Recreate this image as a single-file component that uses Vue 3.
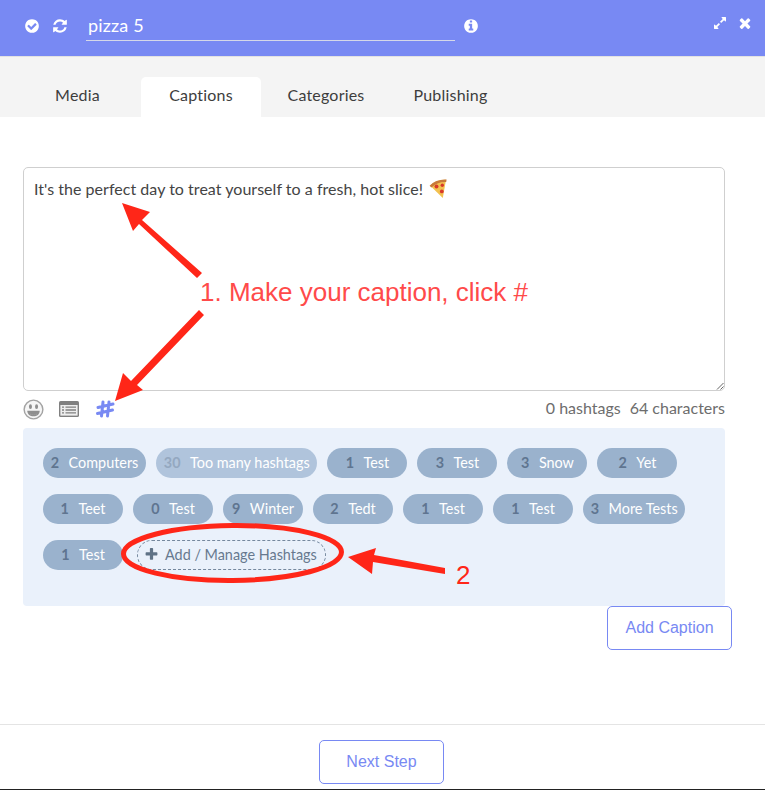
<script setup>
const row = [
  { n: 2, t: 'Computers' }, { n: 30, t: 'Too many hashtags', off: true }, { n: 1, t: 'Test' }, { n: 3, t: 'Test' }, { n: 3, t: 'Snow' }, { n: 2, t: 'Yet' },
  { n: 1, t: 'Teet' }, { n: 0, t: 'Test' }, { n: 9, t: 'Winter' }, { n: 2, t: 'Tedt' }, { n: 1, t: 'Test' }, { n: 1, t: 'Test' }, { n: 3, t: 'More Tests' },
  { n: 1, t: 'Test' }
]
const tabs = ['Media', 'Captions', 'Categories', 'Publishing']
</script>

<template>
  <div class="app">
    <header class="head">
      <svg class="ic ic-check" viewBox="0 0 1792 1792"><path d="M1412 734q0-28-18-46l-91-90q-19-19-45-19t-45 19l-408 407-226-226q-19-19-45-19t-45 19l-91 90q-18 18-18 46 0 27 18 45l362 362q19 19 45 19 27 0 46-19l543-543q18-18 18-45zm252 162q0 209-103 385.5t-279.5 279.5-385.5 103-385.5-103-279.5-279.5-103-385.5 103-385.5 279.5-279.5 385.5-103 385.5 103 279.5 279.5 103 385.5z"/></svg>
      <svg class="ic ic-sync" viewBox="0 0 1792 1792"><path d="M1639 1056q0 5-1 7-64 268-268 434.5t-478 166.5q-146 0-282.5-55t-243.5-157l-129 129q-19 19-45 19t-45-19-19-45v-448q0-26 19-45t45-19h448q26 0 45 19t19 45-19 45l-137 137q71 66 161 102t187 36q134 0 250-65t186-179q11-17 53-117 8-23 30-23h192q13 0 22.5 9.5t9.5 22.5zm25-800v448q0 26-19 45t-45 19h-448q-26 0-45-19t-19-45 19-45l138-138q-148-137-349-137-134 0-250 65t-186 179q-11 17-53 117-8 23-30 23h-199q-13 0-22.5-9.5t-9.5-22.5v-7q65-268 270-434.5t480-166.5q146 0 284 55.5t245 156.5l130-129q19-19 45-19t45 19 19 45z"/></svg>
      <div class="title">pizza 5</div>
      <svg class="ic ic-info" viewBox="0 0 1792 1792"><path d="M1152 1376v-160q0-14-9-23t-23-9h-96v-512q0-14-9-23t-23-9h-320q-14 0-23 9t-9 23v160q0 14 9 23t23 9h96v320h-96q-14 0-23 9t-9 23v160q0 14 9 23t23 9h448q14 0 23-9t9-23zm-128-896v-160q0-14-9-23t-23-9h-192q-14 0-23 9t-9 23v160q0 14 9 23t23 9h192q14 0 23-9t9-23zm640 416q0 209-103 385.5t-279.5 279.5-385.5 103-385.5-103-279.5-279.5-103-385.5 103-385.5 279.5-279.5 385.5-103 385.5 103 279.5 279.5 103 385.5z"/></svg>
      <div class="head-right">
        <svg class="ic-exp" viewBox="0 0 1792 1792"><path d="M883 1056q0 13-10 23l-332 332 144 144q19 19 19 45t-19 45-45 19h-448q-26 0-45-19t-19-45v-448q0-26 19-45t45-19 45 19l144 144 332-332q10-10 23-10t23 10l114 114q10 10 10 23zm781-864v448q0 26-19 45t-45 19-45-19l-144-144-332 332q-10 10-23 10t-23-10l-114-114q-10-10-10-23t10-23l332-332-144-144q-19-19-19-45t19-45 45-19h448q26 0 45 19t19 45z"/></svg>
        <svg class="ic-x" viewBox="0 0 1792 1792"><path d="M1490 1322q0 40-28 68l-136 136q-28 28-68 28t-68-28l-294-294-294 294q-28 28-68 28t-68-28l-136-136q-28-28-28-68t28-68l294-294-294-294q-28-28-28-68t28-68l136-136q28-28 68-28t68 28l294 294 294-294q28-28 68-28t68 28l136 136q28 28 28 68t-28 68l-294 294 294 294q28 28 28 68z"/></svg>
      </div>
    </header>

    <nav class="tabs">
      <div v-for="t in tabs" :key="t" class="tab" :class="[t.toLowerCase(), { active: t === 'Captions' }]">{{ t }}</div>
    </nav>

    <main class="main">
      <div class="editor">
        <span class="caption">It's the perfect day to treat yourself to a fresh, hot slice!</span>
        <svg class="pizza" viewBox="0 0 18 20">
          <path d="M1 6.5C5 2.5 11 .5 17 .8L13.8 19z" fill="#f2c14f"/>
          <path d="M.6 6.8C5 2.2 11 .2 17.6.6l-.4 2.4C11.6 2.6 6.4 4.6 2.4 8.4z" fill="#c77a3a"/>
          <circle cx="7.5" cy="7.6" r="2" fill="#d8392b"/>
          <circle cx="13.3" cy="6.2" r="1.7" fill="#d8392b"/>
          <circle cx="12.8" cy="12.4" r="1.9" fill="#d8392b"/>
        </svg>
        <svg class="grip" viewBox="0 0 8 8"><path d="M1 7.5L7.5 1M4.5 7.5L7.5 4.5" stroke="#666" stroke-width="1" fill="none"/></svg>
      </div>

      <div class="toolbar">
        <svg class="smile" viewBox="0 0 22 22">
          <circle cx="11" cy="11" r="9.8" fill="#f6f6f6" stroke="#a3a3a3" stroke-width="1.5"/>
          <ellipse cx="7.8" cy="8" rx="1.6" ry="2.5" fill="#8f8f8f"/>
          <ellipse cx="14.2" cy="8" rx="1.6" ry="2.5" fill="#8f8f8f"/>
          <path d="M4.5 12.2h13c0 3.6-2.8 6-6.5 6s-6.5-2.4-6.5-6z" fill="#8f8f8f"/>
          <path d="M7.2 15.4c2 1.5 5.6 1.5 7.6 0-1.2 1.6-6.4 1.6-7.6 0z" fill="#e6e6e6"/>
        </svg>
        <svg class="list" viewBox="0 0 20 16">
          <rect width="20" height="16" rx="1.6" fill="#808080"/>
          <rect x="1.4" y="4" width="17.2" height="10.6" fill="#eee"/>
          <path d="M3 6.2h2M6.5 6.2H17M3 9h2M6.5 9H17M3 11.8h2M6.5 11.8H17" stroke="#808080" stroke-width="1.3"/>
        </svg>
        <svg class="hash" viewBox="0 0 20 20">
          <path d="M8 3L6.5 17M14 3L12.5 17M3 8.5L18 5M2.5 14.5L17.5 11" stroke="#7889f3" stroke-width="3" stroke-linecap="round" fill="none"/>
        </svg>
        <div class="counts"><span>0 hashtags</span><span>64 characters</span></div>
      </div>

      <section class="panel">
        <div v-for="(p, i) in row" :key="i" class="pill" :class="{ off: p.off }">
          <b>{{ p.n }}</b><span>{{ p.t }}</span>
        </div>
        <div class="add">
          <svg viewBox="0 0 1792 1792"><path d="M1600 736v192q0 40-28 68t-68 28h-416v416q0 40-28 68t-68 28h-192q-40 0-68-28t-28-68v-416h-416q-40 0-68-28t-28-68v-192q0-40 28-68t68-28h416v-416q0-40 28-68t68-28h192q40 0 68 28t28 68v416h416q40 0 68 28t28 68z"/></svg>
          <span>Add / Manage Hashtags</span>
        </div>
      </section>

      <div class="actions"><button class="btn">Add Caption</button></div>
    </main>

    <footer class="foot"><button class="btn">Next Step</button></footer>

    <svg class="marks" viewBox="0 0 765 790">
      <g fill="#ff2618">
        <path d="M122 203L150 212L142 220L202 273L197 278L139 224L133 231z"/>
        <path d="M115 401L123 373L131 381L199 310L204 315L137 385L143 390z"/>
        <path d="M348 557L376 548L374 555L445 568L445 574L373 562L372 574z"/>
      </g>
      <ellipse cx="232.5" cy="553" rx="109" ry="27.5" fill="none" stroke="#ff2618" stroke-width="5" transform="rotate(-.5 232 553)"/>
    </svg>
    <div class="note note1">1. Make your caption, click #</div>
    <div class="note note2">2</div>
  </div>
</template>

<style>
html, body { margin: 0; background: #fff; }
</style>

<style scoped>
.app {
  position: relative;
  width: 765px;
  height: 790px;
  overflow: hidden;
  display: flex;
  flex-direction: column;
  background: #fff;
  font-family: Lato, "Open Sans", sans-serif;
  color: #3a3a3a;
}
.head {
  height: 56px;
  box-sizing: content-box;
  flex: none;
  display: flex;
  align-items: flex-start;
  background: #7889f3;
  border-bottom: 1px solid #e2e2e2;
  fill: #fff;
}
.ic { width: 16px; height: 16px; margin-top: 18px; flex: none; }
.ic-check { margin-left: 24px; }
.ic-sync { margin-left: 12px; }
.title {
  margin-left: 18px;
  margin-top: 13px;
  width: 369px;
  height: 28px;
  padding-left: 2px;
  box-sizing: border-box;
  border-bottom: 1px solid #d5d8e8;
  color: #fff;
  font-size: 18px;
  letter-spacing: .15px;
  line-height: 24px;
}
.ic-info { margin-left: 8px; }
.head-right { margin-left: auto; display: flex; align-items: center; gap: 10px; margin-top: 15px; padding-right: 12px; }
.ic-exp { width: 14px; height: 14px; }
.ic-x { width: 16px; height: 16px; }
.tabs {
  height: 60px;
  flex: none;
  background: #f4f4f4;
  display: flex;
  align-items: flex-end;
  padding-left: 14px;
  box-sizing: border-box;
}
.tab {
  height: 40px;
  line-height: 36px;
  font-size: 16px;
  letter-spacing: .2px;
  text-align: center;
  color: #3d3d3d;
  border-radius: 5px 5px 0 0;
  flex: none;
}
.media { width: 127px; }
.captions { width: 120px; }
.categories { width: 130px; }
.publishing { width: 119px; }
.active { background: #fff; }
.main { flex: 1; min-height: 0; padding: 50px 0 0 23px; }
.editor {
  position: relative;
  width: 702px;
  height: 224px;
  box-sizing: border-box;
  border: 1px solid #cfcfcf;
  border-radius: 5px;
  padding: 10px 10px;
  font-size: 16px;
  letter-spacing: .03px;
  line-height: 22px;
  color: #444;
  display: flex;
  align-items: flex-start;
}
.pizza { width: 18px; height: 20px; margin: 1px 0 0 6px; flex: none; }
.grip { position: absolute; right: 0; bottom: 0; width: 8px; height: 8px; }
.toolbar {
  width: 702px;
  height: 37px;
  display: flex;
  align-items: center;
  padding-bottom: 1px;
  box-sizing: border-box;
}
.smile { width: 21px; height: 21px; flex: none; }
.list { width: 20px; height: 16px; margin-left: 15px; flex: none; }
.hash { width: 20px; height: 20px; margin-left: 16px; flex: none; }
.counts { margin-left: auto; display: flex; gap: 9px; font-size: 16px; line-height: 20px; margin-bottom: 2px; color: #6d6d6d; }
.panel {
  width: 702px;
  height: 178px;
  box-sizing: border-box;
  padding: 20px;
  background: #eaf1fb;
  border-radius: 4px;
  display: flex;
  flex-wrap: wrap;
  align-content: flex-start;
  gap: 16px 10px;
}
.pill {
  height: 30px;
  min-width: 80px;
  box-sizing: border-box;
  padding: 0 7.75px 1px;
  border-radius: 15px;
  background: #9ab2cd;
  color: #fff;
  font-size: 14.4px;
  display: flex;
  align-items: center;
  justify-content: center;
  gap: 9.5px;
}
.pill b { color: #5f7590; font-weight: 700; }
.pill.off { background: #b0c4dc; }
.pill.off b { color: #94a8c0; }
.add {
  height: 30px;
  width: 189px;
  margin-left: 4px;
  box-sizing: border-box;
  border: 1px dashed #75889e;
  border-radius: 15px;
  color: #67798f;
  font-size: 14.4px;
  display: flex;
  align-items: center;
  padding: 0 0 1px 5.5px;
  gap: 6.5px;
}
.add svg { width: 15px; height: 15px; fill: #5f7286; flex: none; }
.actions { width: 709px; display: flex; justify-content: flex-end; }
.btn {
  width: 125px;
  height: 44px;
  background: #fff;
  border: 1px solid #7889f3;
  border-radius: 5px;
  color: #7889f3;
  font-family: "Liberation Sans", Arial, sans-serif;
  font-size: 16px;
  padding: 0;
}
.foot {
  height: 66px;
  flex: none;
  box-sizing: border-box;
  border-top: 1px solid #e4e4e4;
  border-bottom: 1px solid #222;
  display: flex;
  justify-content: center;
  align-items: flex-start;
  padding: 15px 2px 0 0;
}
.marks { position: absolute; inset: 0; width: 765px; height: 790px; pointer-events: none; }
.note {
  position: absolute;
  font-family: "Liberation Sans", Arial, sans-serif;
  font-size: 26px;
  line-height: 30px;
  white-space: nowrap;
}
.note1 { left: 200px; top: 277px; color: #ff4a4a; }
.note2 { left: 456px; top: 560px; color: #ff2618; }
</style>
